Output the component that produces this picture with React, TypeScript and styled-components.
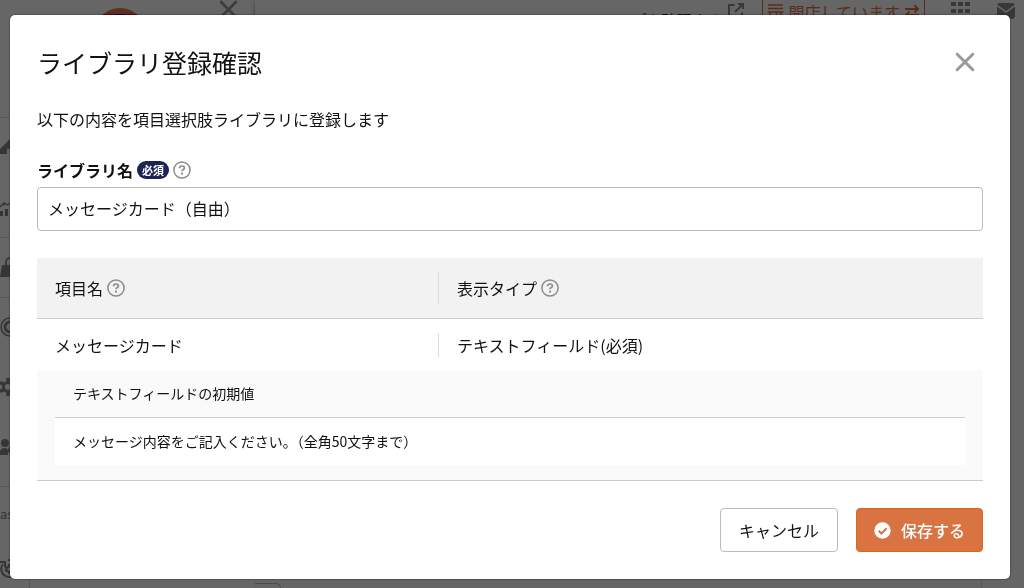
import React from "react";
import styled, { createGlobalStyle } from "styled-components";

const GlobalStyle = createGlobalStyle`
  *, *::before, *::after { box-sizing: border-box; }
  body {
    margin: 0;
    overflow: hidden;
    background: #fff;
    color: #111;
    font-family: "Noto Sans CJK JP", "Noto Sans", sans-serif;
    font-size: 16px;
    line-height: 24px;
  }
  button, input { font: inherit; color: inherit; }
`;

/* ---------- page behind the dialog ---------- */

const Shell = styled.div`
  display: flex;
  height: 100vh;
  overflow: hidden;
`;

const Rail = styled.nav`
  flex: none;
  width: 30px;
  padding-top: 117px;
`;

const RailBody = styled.div`
  height: 100%;
  border-right: 1px solid #ddd;
`;

const RailGroup = styled.div`
  box-shadow: inset 0 1px #ddd;
`;

const RailLink = styled.a`
  display: flex;
  align-items: center;
  height: 60px;
  color: #888;
  text-decoration: none;
`;

const RailHeading = styled.div`
  height: 53px;
  margin-top: 9px;
  padding-top: 16px;
  font-size: 13px;
  color: #888;
`;

const Side = styled.aside`
  display: flex;
  flex: none;
  justify-content: space-between;
  align-items: flex-start;
  width: 225px;
  padding: 0 16px 0 64px;
  border-right: 1px solid #f4f4f4;
`;

const LogoWrap = styled.div`
  padding-top: 8px;
`;

const PlainButton = styled.button`
  display: flex;
  padding: 0;
  border: 0;
  background: none;
  color: #999;
  cursor: pointer;
`;

const Main = styled.div`
  display: flex;
  flex: 1;
  flex-direction: column;
  min-width: 0;
`;

const TopBar = styled.header`
  display: flex;
  flex: none;
  justify-content: flex-end;
  align-items: flex-start;
  height: 35px;
  padding-right: 8px;
  color: #8c8c8c;
  box-shadow: 0 2px 5px rgba(0, 0, 0, 0.35);
`;

const ShopLink = styled.a`
  display: flex;
  gap: 6px;
  margin-right: 17px;
  color: #1b2455;
  font-size: 15px;
  text-decoration: none;
  white-space: nowrap;

  span { padding-top: 8px; }
  svg { margin-top: 1px; color: #8c8c8c; }
`;

const StatusButton = styled.button`
  display: flex;
  align-items: center;
  gap: 4px;
  height: 24px;
  margin-right: 24px;
  padding: 0 4px;
  border: 1px solid #dc7142;
  border-top: 0;
  background: none;
  color: #dc7142;
  white-space: nowrap;
`;

const IconLink = styled.a`
  display: flex;
  margin-left: 2px;
  margin-right: 23px;
  color: #8c8c8c;
  &:last-child { margin-right: 0; }
`;

const Content = styled.main`
  display: flex;
  flex: 1;
  align-items: flex-end;
  justify-content: space-between;
  background: #fcfcfc;
`;

const ContentTab = styled.div`
  width: 26px;
  height: 5px;
  border: 1px solid #bbb;
  border-width: 1px 1px 0 0;
  border-radius: 0 6px 0 0;
`;

const ContentEdge = styled.div`
  width: 43px;
  height: 100%;
  border-left: 1px solid #ddd;
`;

/* ---------- dialog ---------- */

const Overlay = styled.div`
  position: fixed;
  inset: 0;
  padding: 15px 14px 9px 10px;
  background: rgba(0, 0, 0, 0.6);
`;

const Dialog = styled.section`
  padding: 29px 27px 27px;
  border-radius: 5px;
  background: #fff;
  box-shadow: 0 0 2px rgba(0, 0, 0, 0.7);
`;

const DialogHeader = styled.header`
  display: flex;
  align-items: center;
  justify-content: space-between;
  padding-right: 8px;
`;

const Title = styled.h1`
  margin: 0;
  font-size: 25px;
  font-weight: 400;
  line-height: 36px;
`;

const Lead = styled.p`
  margin: 27px 0;
`;

const LabelRow = styled.div`
  display: flex;
  align-items: center;
  gap: 4px;
  margin-bottom: 5px;
`;

const FieldLabel = styled.label`
  font-weight: 700;
`;

const Required = styled.span`
  padding: 0 5px;
  border-radius: 9px;
  background: #1b2455;
  color: #fff;
  font-size: 11px;
  font-weight: 700;
  line-height: 18px;
`;

const HelpButton = styled(PlainButton)`
  color: #8c8c8c;
`;

const TextInput = styled.input`
  display: block;
  width: 100%;
  height: 44px;
  margin: 0 0 27px;
  padding: 0 10px 2px;
  border: 1px solid #bbb;
  border-radius: 4px;
  background: #fff;
  outline: none;
`;

const Table = styled.table`
  width: 100%;
  border-collapse: separate;
  border-spacing: 0;
  border-bottom: 1px solid #ccc;
  table-layout: fixed;
  text-align: left;
`;

const HeadCell = styled.th<{ $width?: string }>`
  width: ${(p) => p.$width ?? "auto"};
  height: 61px;
  padding: 0;
  border-bottom: 1px solid #ccc;
  background: #f2f2f2;
  font-weight: 400;
`;

const Cell = styled.td`
  height: 51px;
  padding: 0;
`;

const CellBody = styled.div<{ $divided?: boolean; $tall?: boolean }>`
  display: flex;
  align-items: center;
  gap: 4px;
  height: ${(p) => (p.$tall ? 32 : 24)}px;
  padding: 0 18px;
  border-left: ${(p) => (p.$divided ? "1px solid #ddd" : "0")};
`;

const DetailCell = styled.td`
  padding: 0 18px 15px;
  background: #fafafa;
`;

const DetailTable = styled.table`
  width: 100%;
  border-spacing: 0;
  text-align: left;
  font-size: 14px;
`;

const DetailHead = styled.th`
  height: 48px;
  padding: 0 18px 2px;
  border-bottom: 1px solid #ccc;
  font-weight: 400;
`;

const DetailValue = styled.td`
  height: 47px;
  padding: 0 18px 2px;
  background: #fff;
`;

const Actions = styled.footer`
  display: flex;
  justify-content: flex-end;
  gap: 18px;
  margin-top: 27px;
`;

const ActionButton = styled.button<{ $primary?: boolean }>`
  display: flex;
  align-items: center;
  gap: 10px;
  height: 44px;
  padding: 0 ${(p) => (p.$primary ? 17 : 18)}px;
  border: 1px solid ${(p) => (p.$primary ? "#d9651f" : "#bbb")};
  border-radius: 4px;
  background: ${(p) => (p.$primary ? "#d97342" : "#fff")};
  color: ${(p) => (p.$primary ? "#fff" : "#111")};
  font-weight: ${(p) => (p.$primary ? 500 : 400)};
  cursor: pointer;
`;

/* ---------- icons ---------- */

const CloseIcon = ({ size = 20, width = 3 }: { size?: number; width?: number }) => (
  <svg width={size} height={size} viewBox="0 0 20 20" fill="none" stroke="currentColor" strokeWidth={width} strokeLinecap="round">
    <path d="M2.2 2.2 17.8 17.8M17.8 2.2 2.2 17.8" />
  </svg>
);

const Help = () => (
  <HelpButton type="button" aria-label="ヘルプ">
    <svg width="18" height="18" viewBox="0 0 18 18" fill="none" stroke="currentColor">
      <circle cx="9" cy="9" r="8.1" strokeWidth="1.5" />
      <path d="M6.6 7.2c0-1.4 1-2.2 2.4-2.2s2.4.8 2.4 2c0 1.500-2.400 1.600-2.400 3.300" strokeWidth="1.7" />
      <circle cx="9" cy="12.700" r="1.1" fill="currentColor" stroke="none" />
    </svg>
  </HelpButton>
);

const CheckIcon = () => (
  <svg width="17" height="17" viewBox="0 0 17 17">
    <circle cx="8.5" cy="8.5" r="8.2" fill="#fff" />
    <path d="m4.6 8.7 2.8 2.8 5.2-5.3" fill="none" stroke="#d97342" strokeWidth="2" />
  </svg>
);

const Logo = () => (
  <svg width="52" height="52" viewBox="0 0 52 52">
    <defs>
      <clipPath id="logo-clip"><circle cx="26" cy="26" r="26" /></clipPath>
    </defs>
    <g clipPath="url(#logo-clip)">
      <path d="M0 0h52v52H0z" fill="#e8794a" />
      <path d="M0 6h52v8H0z" fill="#dc1f26" />
      <path d="M20 6h12v8H20z" fill="#1b2490" />
    </g>
  </svg>
);

const OpenIcon = () => (
  <svg width="18" height="18" viewBox="0 0 18 18" fill="none" stroke="currentColor" strokeWidth="2">
    <path d="M7.5 4H2v13h13v-5.500M11 3h5v5M16 3 8 11" />
  </svg>
);

const StoreIcon = () => (
  <svg width="17" height="18" viewBox="0 0 17 18" fill="none" stroke="currentColor" strokeWidth="1.6">
    <path d="M1 2h15M1 5.500h15M.5 9h16M3 9v8h6.500V9M14 9v8M3 13h6.500" />
  </svg>
);

const SwapIcon = () => (
  <svg width="16" height="16" viewBox="0 0 16 16" fill="none" stroke="currentColor" strokeWidth="1.8">
    <path d="M1 5h13M10.500 1.500 14 5l-3.500 3.500M15 11H2M5.500 7.500 2 11l3.500 3.500" />
  </svg>
);

const GridIcon = () => (
  <svg width="20" height="22" viewBox="0 0 20 22" fill="currentColor">
    {[2, 9, 16].map((y) => [0, 7, 14].map((x) => <rect key={`${x}-${y}`} x={x} y={y} width="5" height="4" />))}
  </svg>
);

const MailIcon = () => (
  <svg width="20" height="20" viewBox="0 0 20 20" fill="currentColor">
    <path d="M3 3h14l2 1.500-9 6.500-9-6.500zM1 6.500l9 6.500 9-6.500V17l-2 2H3l-2-2z" />
  </svg>
);

const railIcons: Record<string, React.ReactNode> = {
  home: <path d="M0 12 10 2l10 10v5h-7v-5H7v5H0z" fill="currentColor" />,
  chart: (
    <>
      <path d="M0 14h3v5H0zM5 12h3v7H5zM10 10h3v9h-3z" fill="currentColor" />
      <path d="M0 10l4-4 4 2 5-5" fill="none" stroke="currentColor" strokeWidth="1.3" />
      <circle cx="4" cy="7" r="1.6" fill="currentColor" />
    </>
  ),
  bag: (
    <>
      <path d="M2 8h16l2 12H0z" fill="currentColor" />
      <path d="M6 11V5a4 4 0 0 1 8 0v6" fill="none" stroke="currentColor" strokeWidth="1.8" />
    </>
  ),
  coin: (
    <g fill="none" stroke="currentColor">
      <circle cx="10" cy="10" r="9" strokeWidth="1.5" />
      <path d="M13 6a5 5 0 1 0 0 8" strokeWidth="3" />
    </g>
  ),
  gear: (
    <g stroke="currentColor" fill="none">
      <circle cx="8" cy="10" r="4.5" strokeWidth="3" />
      <path d="M8 1v4M8 15v4M0 5.500l4 2M12 12.500l4 2M0 14.500l4-2M12 7.500l4-2" strokeWidth="3.5" />
    </g>
  ),
  user: (
    <g fill="currentColor">
      <circle cx="5" cy="6" r="4" />
      <path d="M0 18v-3c0-5 7-5 8-2v5z" />
      <circle cx="12" cy="13" r="4" />
    </g>
  ),
  cycle: (
    <g fill="none" stroke="currentColor">
      <path d="M3 5A8 8 0 1 0 17 12M0 3h5v5" strokeWidth="2" />
      <circle cx="9" cy="10" r="2.5" strokeWidth="2" />
      <path d="M9 5v3M9 12v3M5 8l2 1M11 11l2 1M5 12l2-1M11 9l2-1M8 1h5" strokeWidth="2" />
    </g>
  ),
};

const RailItem = ({ icon, label }: { icon: string; label: string }) => (
  <RailLink href="#" aria-label={label}>
    <svg width="20" height="20" viewBox="0 0 20 20">{railIcons[icon]}</svg>
  </RailLink>
);

/* ---------- page ---------- */

const Backdrop = () => (
  <Shell aria-hidden="true">
    <Rail>
      <RailBody>
        <RailGroup>
          <RailItem icon="home" label="ホーム" />
          <RailItem icon="chart" label="分析" />
        </RailGroup>
        <RailGroup>
          <RailItem icon="bag" label="商品" />
        </RailGroup>
        <RailGroup>
          <RailItem icon="coin" label="売上" />
          <RailItem icon="gear" label="設定" />
          <RailItem icon="user" label="顧客" />
        </RailGroup>
        <RailGroup as={RailHeading}>as</RailGroup>
        <RailItem icon="cycle" label="定期" />
      </RailBody>
    </Rail>
    <Side>
      <LogoWrap><Logo /></LogoWrap>
      <PlainButton type="button" aria-label="メニューを閉じる"><CloseIcon size={19} width={3} /></PlainButton>
    </Side>
    <Main>
      <TopBar>
        <ShopLink href="#"><span>ショップを確認する</span><OpenIcon /></ShopLink>
        <StatusButton type="button"><StoreIcon />開店しています<SwapIcon /></StatusButton>
        <IconLink href="#" aria-label="アプリ"><GridIcon /></IconLink>
        <IconLink href="#" aria-label="メール"><MailIcon /></IconLink>
      </TopBar>
      <Content>
        <ContentTab />
        <ContentEdge />
      </Content>
    </Main>
  </Shell>
);

export default function App() {
  return (
    <>
      <GlobalStyle />
      <Backdrop />
      <Overlay>
        <Dialog role="dialog" aria-modal="true" aria-labelledby="dialog-title">
          <DialogHeader>
            <Title id="dialog-title">ライブラリ登録確認</Title>
            <PlainButton type="button" aria-label="閉じる"><CloseIcon /></PlainButton>
          </DialogHeader>
          <Lead>以下の内容を項目選択肢ライブラリに登録します</Lead>
          <LabelRow>
            <FieldLabel htmlFor="library-name">ライブラリ名</FieldLabel>
            <Required>必須</Required>
            <Help />
          </LabelRow>
          <TextInput id="library-name" type="text" defaultValue="メッセージカード（自由）" />
          <Table>
            <thead>
              <tr>
                <HeadCell scope="col" $width="42.4%">
                  <CellBody $tall>項目名<Help /></CellBody>
                </HeadCell>
                <HeadCell scope="col">
                  <CellBody $tall $divided>表示タイプ<Help /></CellBody>
                </HeadCell>
              </tr>
            </thead>
            <tbody>
              <tr>
                <Cell><CellBody>メッセージカード</CellBody></Cell>
                <Cell><CellBody $divided>テキストフィールド(必須)</CellBody></Cell>
              </tr>
              <tr>
                <DetailCell colSpan={2}>
                  <DetailTable>
                    <thead>
                      <tr><DetailHead scope="col">テキストフィールドの初期値</DetailHead></tr>
                    </thead>
                    <tbody>
                      <tr><DetailValue>メッセージ内容をご記入ください。（全角50文字まで）</DetailValue></tr>
                    </tbody>
                  </DetailTable>
                </DetailCell>
              </tr>
            </tbody>
          </Table>
          <Actions>
            <ActionButton type="button">キャンセル</ActionButton>
            <ActionButton type="button" $primary><CheckIcon />保存する</ActionButton>
          </Actions>
        </Dialog>
      </Overlay>
    </>
  );
}
